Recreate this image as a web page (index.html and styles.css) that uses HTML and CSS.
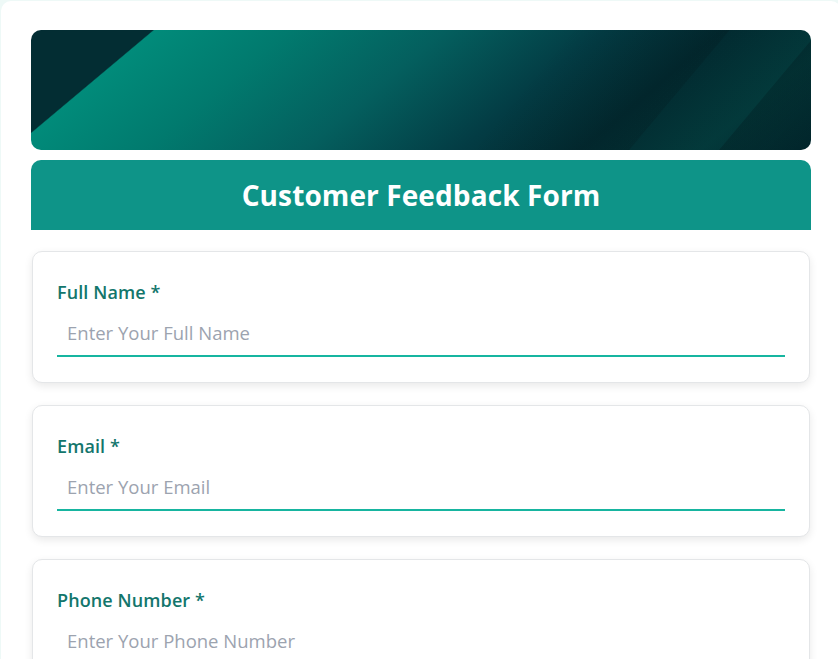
FILE: index.html
```html
<!DOCTYPE html>
<html lang="en">
<head>
<meta charset="utf-8">
<title>Customer Feedback Form</title>
<link rel="stylesheet" href="styles.css">
</head>
<body>
<div class="page">
  <div class="banner">
    <div class="stripe s1"></div>
    <div class="stripe s2"></div>
    <div class="stripe s3"></div>
  </div>
  <div class="header"><h1>Customer Feedback Form</h1></div>
  <form class="form">
    <div class="card">
      <label class="label" for="name">Full Name *</label>
      <input class="input" id="name" type="text" placeholder="Enter Your Full Name">
    </div>
    <div class="card">
      <label class="label" for="email">Email *</label>
      <input class="input" id="email" type="email" placeholder="Enter Your Email">
    </div>
    <div class="card">
      <label class="label" for="phone">Phone Number *</label>
      <input class="input" id="phone" type="tel" placeholder="Enter Your Phone Number">
    </div>
  </form>
</div>
</body>
</html>
```

FILE: styles.css
```css
html, body {
  margin: 0;
  padding: 0;
  overflow: hidden;
  background: #eef9f7;
  font-family: "Open Sans", "Noto Sans", sans-serif;
}
.page {
  margin: 1px 0 0 1px;
  width: 780px;
  padding: 29px 30px 30px 30px;
  background: #ffffff;
  border-radius: 10px;
  min-height: 700px;
}
.banner {
  position: relative;
  height: 120px;
  border-radius: 10px;
  overflow: hidden;
  background:
    linear-gradient(140deg, #032d33 0, #032d33 13.2%, #018b7a 13.4%, #017a6e 28%, #045f5e 45%, #033c44 62%, #022a30 75%, #033a3b 88%, #01282e 100%);
}
.stripe {
  position: absolute;
  top: -40px;
  height: 220px;
  width: 160px;
  transform: skewX(-40deg);
  opacity: 0.35;
}
.s1 { left: 480px; background: linear-gradient(90deg, rgba(0,20,25,0.0), rgba(0,20,25,0.6)); }
.s2 { left: 620px; background: linear-gradient(90deg, rgba(0,60,65,0.0), rgba(0,50,55,0.5)); }
.s3 { left: 730px; background: linear-gradient(90deg, rgba(0,15,20,0.7), rgba(0,30,35,0.2)); }
.header {
  margin-top: 10px;
  height: 70px;
  background: #0e9488;
  border-radius: 10px 10px 0 0;
  display: flex;
  align-items: center;
  justify-content: center;
}
.header h1 {
  margin: 0;
  color: #ffffff;
  font-size: 28px;
  font-weight: 700;
  letter-spacing: 0.1px;
}
.form {
  display: flex;
  flex-direction: column;
  gap: 22px;
  margin-top: 21px;
  padding: 0 1px;
}
.card {
  background: #ffffff;
  border: 1px solid #e4e6e8;
  border-radius: 10px;
  box-shadow: 0 3px 8px rgba(0, 0, 0, 0.09);
  padding: 28px 24px 25px 24px;
  display: flex;
  flex-direction: column;
}
.label {
  color: #13766c;
  font-size: 18px;
  font-weight: 600;
  line-height: 24px;
  height: 24px;
  margin-bottom: 6px;
  letter-spacing: 0.1px;
}
.input {
  box-sizing: border-box;
  height: 47px;
  font-family: inherit;
  font-size: 18.5px;
  line-height: 25px;
  padding: 10px 10px;
  border: none;
  border-bottom: 2px solid #17b5a0;
  outline: none;
  color: #333;
  background: transparent;
}
.input::placeholder {
  color: #9ca3af;
}
```
